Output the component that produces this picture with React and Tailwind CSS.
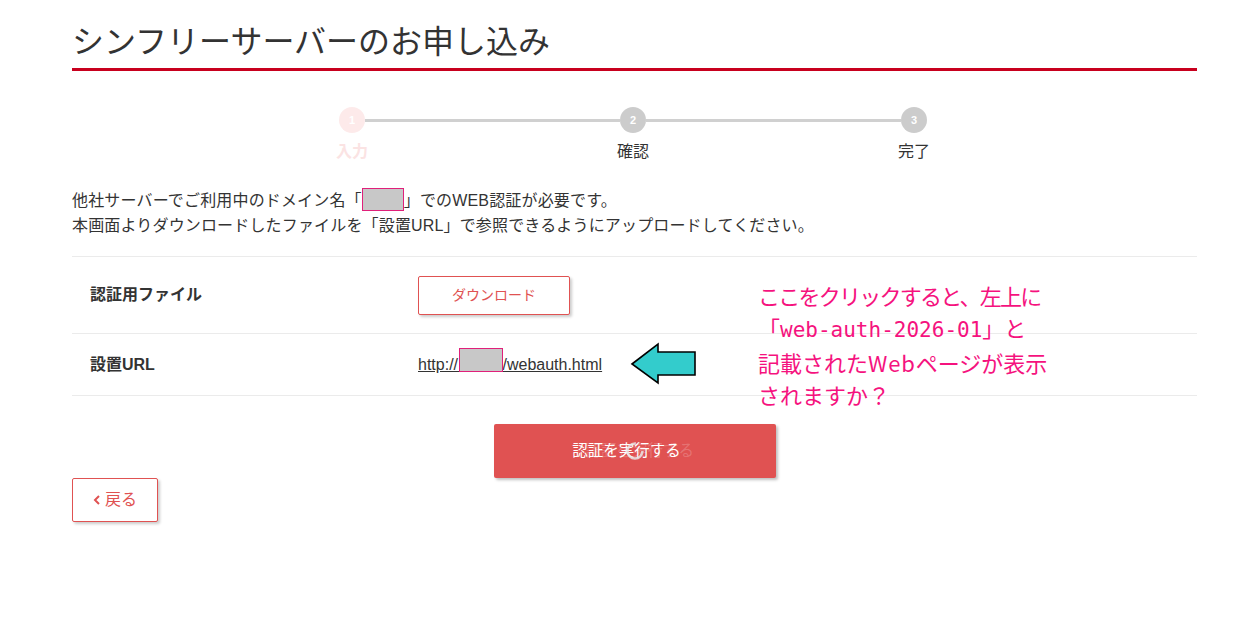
const font = { fontFamily: '"Liberation Sans", "Noto Sans CJK JP", sans-serif' };

function Step({ n, label, active }) {
  return (
    <div className="flex w-[26px] flex-col items-center">
      <div
        className={
          "flex h-[26px] w-[26px] items-center justify-center rounded-full text-[11px] font-bold text-white " +
          (active ? "bg-[#fdeaea]" : "bg-[#cccccc]")
        }
      >
        {n}
      </div>
      <div
        className={
          "mt-[7px] whitespace-nowrap text-[16px] leading-[24px] " +
          (active ? "font-bold text-[#fbe3e3]" : "text-[#333333]")
        }
      >
        {label}
      </div>
    </div>
  );
}

function Arrow() {
  return (
    <svg width="68" height="44" viewBox="0 0 68 44" className="absolute left-[630px] top-[342px]">
      <polygon
        points="2,22 28,2 28,10 65,10 65,33 28,33 28,41"
        fill="#33cccc"
        stroke="#000"
        strokeWidth="1.6"
        strokeLinejoin="miter"
      />
    </svg>
  );
}

export default function App() {
  return (
    <div className="relative min-h-screen bg-white text-[#333333]" style={font}>
      <div className="ml-[72px] w-[1125px] pt-[18px]">
        <h1 className="border-b-[3px] border-[#c8001e] pb-[2px] text-[32px] font-normal leading-[48px]">
          シンフリーサーバーのお申し込み
        </h1>

        <div className="ml-[267px] mt-[36px] flex w-[588px] items-start">
          <Step n="1" label="入力" active />
          <div className="mt-[11.5px] h-[3px] flex-1 bg-[#d0d0d0]" />
          <Step n="2" label="確認" />
          <div className="mt-[11.5px] h-[3px] flex-1 bg-[#d0d0d0]" />
          <Step n="3" label="完了" />
        </div>

        <div className="mt-[19px] text-[16px] leading-[25px] tracking-[0.01em]">
          <p>
            他社サーバーでご利用中のドメイン名「
            <span className="inline-block h-[23px] w-[42px] translate-y-[5px] border border-[#e0207a] bg-[#c8c8c8]" />
            」でのWEB認証が必要です。
          </p>
          <p>本画面よりダウンロードしたファイルを「設置URL」で参照できるようにアップロードしてください。</p>
        </div>

        <div className="mt-[18px] border-t border-[#ebebeb]">
          <div className="flex h-[77px] items-center border-b border-[#ebebeb]">
            <div className="w-[346px] pl-[18px] text-[16px] font-bold">認証用ファイル</div>
            <button className="h-[39px] w-[152px] rounded-[2px] border border-[#e05252] bg-white text-[14px] text-[#e05252] shadow-[2px_2px_3px_rgba(0,0,0,0.2)]">
              ダウンロード
            </button>
          </div>
          <div className="flex h-[62px] items-center border-b border-[#ebebeb]">
            <div className="w-[346px] pl-[18px] text-[16px] font-bold">設置URL</div>
            <span className="relative text-[16px] text-[#333333] underline">
              {"http://\u00a0\u00a0\u00a0\u00a0\u00a0\u00a0\u00a0\u00a0\u00a0\u00a0/webauth.html"}
              <span className="absolute left-[41px] top-[-5px] h-[24px] w-[44px] border border-[#e0207a] bg-[#c8c8c8]" />
            </span>
          </div>
        </div>

        <div className="mt-[28px] flex justify-center">
          <button className="relative flex h-[54px] w-[282px] items-center justify-center rounded-[2px] bg-[#e05252] pr-[16px] text-[15.5px] text-white shadow-[2px_2px_3px_rgba(0,0,0,0.25)]">
            <span className="absolute left-[92px] text-white/20">認証を実行する</span>
            <span className="relative">認証を実行する</span>
            <svg width="20" height="20" viewBox="0 0 20 20" className="absolute left-[131px] top-[17px]">
              <circle cx="10" cy="10" r="7.5" fill="none" stroke="rgba(230,230,230,0.85)" strokeWidth="2.5" strokeDasharray="36 11" />
            </svg>
          </button>
        </div>

        <button className="flex h-[44px] w-[86px] items-center justify-center gap-[4px] rounded-[2px] border border-[#e05252] bg-white text-[16px] text-[#e05252] shadow-[2px_2px_3px_rgba(0,0,0,0.2)]">
          <svg width="8" height="12" viewBox="0 0 8 12">
            <path d="M6 2 L2 6 L6 10" fill="none" stroke="#e05252" strokeWidth="2" />
          </svg>
          戻る
        </button>
      </div>

      <Arrow />
      <div
        className="absolute left-[758px] top-[279px] text-[22px] leading-[32px] text-[#f5127e]"
        style={{ fontFamily: '"Noto Sans CJK JP", sans-serif' }}
      >
        <div className="tracking-[-0.08em]">ここをクリックすると、左上に</div>
        <div>
          「<span className="text-[21px]" style={{ fontFamily: '"DejaVu Sans Mono", monospace' }}>web-auth-2026-01</span>」と
        </div>
        <div>
          記載された<span className="tracking-[0.04em]">Web</span>ページが表示
        </div>
        <div>されますか？</div>
      </div>
    </div>
  );
}
